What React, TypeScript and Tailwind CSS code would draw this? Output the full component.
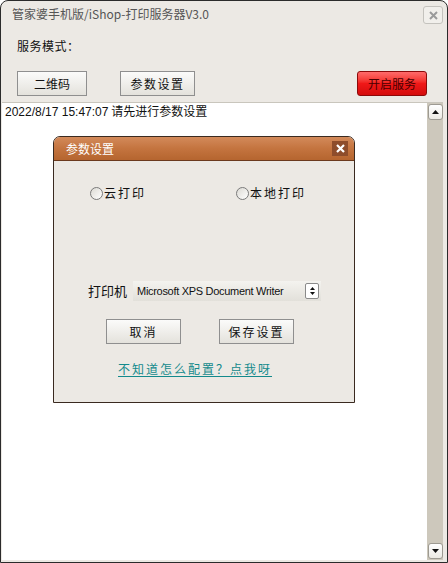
import React from "react";

const cjk = "font-['Noto_Sans_CJK_SC','Noto_Sans',sans-serif]";

function WinButton({ children, className = "" }: { children: React.ReactNode; className?: string }) {
  return (
    <button
      type="button"
      className={`flex h-[25px] items-center justify-center border border-[#8f8f8f] bg-gradient-to-b from-[#fbfbfa] to-[#e4e2dc] text-[12px] text-[#111] ${className}`}
    >
      {children}
    </button>
  );
}

function Radio({ label }: { label: string }) {
  return (
    <label className="flex items-center gap-[1px] text-[12px] tracking-[2px] text-[#111]">
      <span className="h-[13px] w-[13px] rounded-full border border-[#7a7a7a] bg-gradient-to-br from-[#dcdad4] to-[#ffffff]" />
      {label}
    </label>
  );
}

function ScrollArrow({ up }: { up?: boolean }) {
  return (
    <div className="flex h-[16px] w-[15px] items-center justify-center rounded-[3px] border border-[#9d9a92] bg-gradient-to-b from-[#ffffff] to-[#ebe9e3]">
      <svg width="7" height="4" viewBox="0 0 7 4">
        <path d={up ? "M0 4 L3.5 0 L7 4 Z" : "M0 0 L3.5 4 L7 0 Z"} fill="#111" />
      </svg>
    </div>
  );
}

export default function App() {
  return (
    <div className={`relative flex h-[563px] w-[448px] flex-col overflow-hidden rounded-t-[8px] border border-[#2b2b2b] bg-[#ece9e4] ${cjk}`}>
      {/* title bar */}
      <div className="flex h-[25px] items-center justify-between pl-[11px] pr-[4px]">
        <span className="text-[12px] text-[#555]">管家婆手机版/iShop-打印服务器V3.0</span>
        <div className="mt-[3px] flex h-[18px] w-[20px] items-center justify-center rounded-[3px] border border-[#c4c2bd] bg-[#f1efeb]">
          <svg width="9" height="9" viewBox="0 0 9 9">
            <path d="M1 1 L8 8 M8 1 L1 8" stroke="#9a9a9a" strokeWidth="2" />
          </svg>
        </div>
      </div>

      <div className="mt-[11px] pl-[16px] text-[12px] tracking-[0.5px] text-[#111]">服务模式：</div>

      <div className="mt-[16px] flex items-center pl-[16px] pr-[20px]">
        <WinButton className="w-[70px]">二维码</WinButton>
        <WinButton className="ml-[33px] w-[75px] tracking-[1.5px]">参数设置</WinButton>
        <button
          type="button"
          className="ml-auto flex h-[25px] w-[70px] items-center justify-center rounded-[3px] border border-[#8c0a0a] bg-gradient-to-b from-[#ff6a6a] via-[#f01818] to-[#d40c0c] text-[12px] text-[#4a0000]"
        >
          开启服务
        </button>
      </div>

      {/* log area */}
      <div className="mb-[2px] ml-[1px] mr-[4px] mt-[6px] flex flex-1 border-t border-[#c9c6bd] bg-white">
        <div className="flex-1 pl-[3px] text-[12px] leading-[16px] text-[#111]">
          <span className="font-['Liberation_Sans',sans-serif]">2022/8/17 15:47:07</span> 请先进行参数设置
        </div>
        <div className="flex w-[16px] flex-col items-center bg-[#cdc8bc] pt-[1px] pb-[1px]">
          <ScrollArrow up />
          <div className="flex-1" />
          <ScrollArrow />
        </div>
      </div>

      {/* dialog */}
      <div className="absolute left-[52px] top-[135px] flex h-[267px] w-[302px] flex-col overflow-hidden rounded-t-[7px] border border-[#3a2a20] bg-[#ece9e4]">
        <div className="flex h-[24px] items-center justify-between border-b border-[#6b3a1e] bg-gradient-to-b from-[#d38a5a] via-[#c4743f] to-[#b5652f] pl-[12px] pr-[6px]">
          <span className="text-[12px] leading-[14px] text-white">参数设置</span>
          <div className="flex h-[15px] w-[16px] items-center justify-center bg-[#8e4d2b]">
            <svg width="9" height="9" viewBox="0 0 9 9">
              <path d="M1 1 L8 8 M8 1 L1 8" stroke="#fff" strokeWidth="2.2" />
            </svg>
          </div>
        </div>

        <div className="mt-[23px] flex items-center pl-[36px]">
          <div className="w-[146px]">
            <Radio label="云打印" />
          </div>
          <Radio label="本地打印" />
        </div>

        <div className="mt-[79px] flex items-center pl-[34px]">
          <span className="text-[13px] text-[#111]">打印机</span>
          <div className="ml-[6px] flex h-[20px] w-[188px] items-center justify-between bg-gradient-to-b from-[#f4f3ef] to-[#e2e0da] pl-[4px] pr-[2px]">
            <span className="font-['Liberation_Sans',sans-serif] text-[11px] tracking-[-0.3px] text-[#111]">
              Microsoft XPS Document Writer
            </span>
            <div className="flex h-[16px] w-[14px] flex-col items-center justify-center gap-[2px] rounded-[2px] border border-[#8a8a8a] bg-white">
              <svg width="5" height="3" viewBox="0 0 5 3">
                <path d="M0 3 L2.5 0 L5 3 Z" fill="#111" />
              </svg>
              <svg width="5" height="3" viewBox="0 0 5 3">
                <path d="M0 0 L2.5 3 L5 0 Z" fill="#111" />
              </svg>
            </div>
          </div>
        </div>

        <div className="mt-[18px] flex items-center pl-[52px]">
          <WinButton className="w-[75px] tracking-[2px]">取消</WinButton>
          <WinButton className="ml-[38px] w-[75px] tracking-[2px]">保存设置</WinButton>
        </div>

        <div className="mt-[15px] pl-[64px] leading-[16px]">
          <a className="text-[12px] tracking-[2px] text-[#138a8c] underline underline-offset-2">
            不知道怎么配置？点我呀
          </a>
        </div>
      </div>
    </div>
  );
}
